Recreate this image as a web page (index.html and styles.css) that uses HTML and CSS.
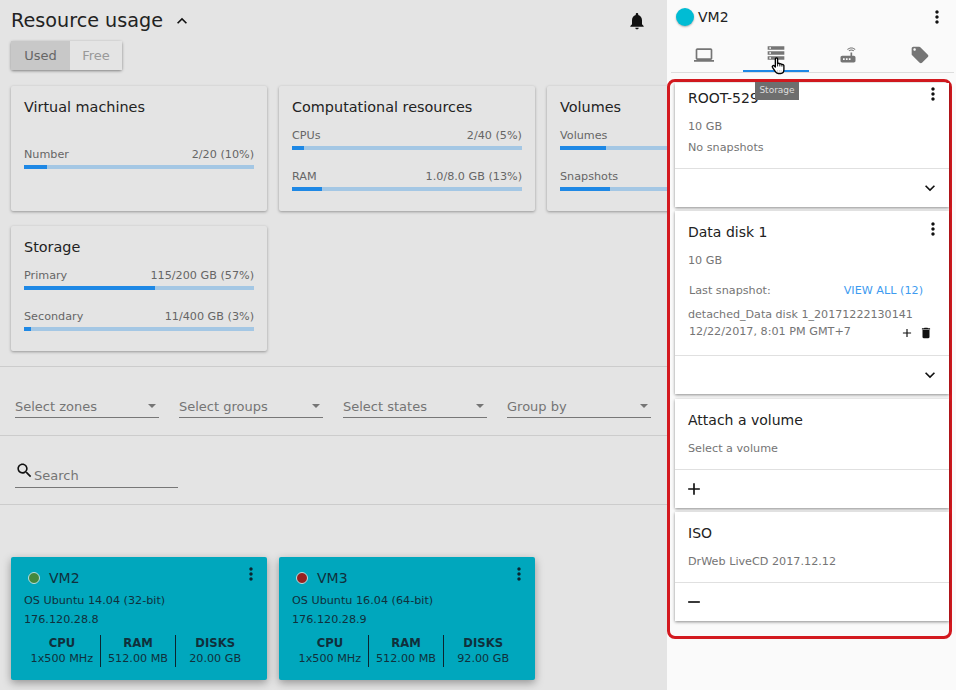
FILE: index.html
```html
<!DOCTYPE html>
<html lang="en">
<head>
    <meta charset="UTF-8">
    <title>Resource usage</title>
    <link rel="stylesheet" href="styles.css">
</head>
<body>
    <svg class="defs" width="0" height="0">
        <symbol id="i-more" viewBox="0 0 24 24"><path d="M12 8c1.1 0 2-.9 2-2s-.9-2-2-2-2 .9-2 2 .9 2 2 2zm0 2c-1.1 0-2 .9-2 2s.9 2 2 2 2-.9 2-2-.9-2-2-2zm0 6c-1.1 0-2 .9-2 2s.9 2 2 2 2-.9 2-2-.9-2-2-2z"/></symbol>
        <symbol id="i-down" viewBox="0 0 24 24"><path d="M16.59 8.59L12 13.17 7.41 8.59 6 10l6 6 6-6z"/></symbol>
        <symbol id="i-add" viewBox="0 0 24 24"><path d="M19 13h-6v6h-2v-6H5v-2h6V5h2v6h6v2z"/></symbol>
    </svg>

    <main class="main">
        <div class="title-row">
            <h1>Resource usage</h1>
            <svg class="icon chevron" viewBox="0 0 24 24"><path d="M12 8l-6 6 1.41 1.41L12 10.83l4.59 4.58L18 14z"/></svg>
            <svg class="icon bell" viewBox="0 0 24 24"><path d="M12 22c1.1 0 2-.9 2-2h-4c0 1.1.89 2 2 2zm6-6v-5c0-3.07-1.64-5.64-4.5-6.32V4c0-.83-.67-1.5-1.5-1.5s-1.5.67-1.5 1.5v.68C7.63 5.36 6 7.92 6 11v5l-2 2v1h16v-1l-2-2z"/></svg>
        </div>
        <div class="toggle">
            <span class="toggle-on">Used</span>
            <span class="toggle-off">Free</span>
        </div>

        <section class="stats">
            <div class="stat-card">
                <h2>Virtual machines</h2>
                <div class="stat-body stat-body-low">
                    <div class="meter">
                        <div class="meter-text"><span>Number</span><span>2/20 (10%)</span></div>
                        <div class="bar"><div class="bar-fill" style="width: 10%"></div></div>
                    </div>
                </div>
            </div>
            <div class="stat-card">
                <h2>Computational resources</h2>
                <div class="stat-body">
                    <div class="meter">
                        <div class="meter-text"><span>CPUs</span><span>2/40 (5%)</span></div>
                        <div class="bar"><div class="bar-fill" style="width: 5%"></div></div>
                    </div>
                    <div class="meter">
                        <div class="meter-text"><span>RAM</span><span>1.0/8.0 GB (13%)</span></div>
                        <div class="bar"><div class="bar-fill" style="width: 13%"></div></div>
                    </div>
                </div>
            </div>
            <div class="stat-card">
                <h2>Volumes</h2>
                <div class="stat-body">
                    <div class="meter">
                        <div class="meter-text"><span>Volumes</span></div>
                        <div class="bar"><div class="bar-fill" style="width: 20%"></div></div>
                    </div>
                    <div class="meter">
                        <div class="meter-text"><span>Snapshots</span></div>
                        <div class="bar"><div class="bar-fill" style="width: 21.7%"></div></div>
                    </div>
                </div>
            </div>
            <div class="stat-card">
                <h2>Storage</h2>
                <div class="stat-body">
                    <div class="meter">
                        <div class="meter-text"><span>Primary</span><span>115/200 GB (57%)</span></div>
                        <div class="bar"><div class="bar-fill" style="width: 57%"></div></div>
                    </div>
                    <div class="meter">
                        <div class="meter-text"><span>Secondary</span><span>11/400 GB (3%)</span></div>
                        <div class="bar"><div class="bar-fill" style="width: 3%"></div></div>
                    </div>
                </div>
            </div>
        </section>

        <section class="filters">
            <div class="select"><span>Select zones</span><i class="caret"></i></div>
            <div class="select"><span>Select groups</span><i class="caret"></i></div>
            <div class="select"><span>Select states</span><i class="caret"></i></div>
            <div class="select"><span>Group by</span><i class="caret"></i></div>
        </section>

        <section class="search-row">
            <div class="search">
                <svg class="icon search-icon" viewBox="0 0 24 24"><path d="M15.5 14h-.79l-.28-.27C15.41 12.59 16 11.11 16 9.5 16 5.91 13.09 3 9.5 3S3 5.91 3 9.5 5.91 16 9.5 16c1.61 0 3.09-.59 4.23-1.57l.27.28v.79l5 4.99L20.49 19l-4.99-5zm-6 0C7.01 14 5 11.99 5 9.5S7.01 5 9.5 5 14 7.01 14 9.5 11.99 14 9.5 14z"/></svg>
                <span>Search</span>
            </div>
        </section>

        <section class="vms">
            <div class="vm-card">
                <div class="vm-head">
                    <i class="dot dot-green"></i><span class="vm-name">VM2</span>
                    <svg class="icon vm-more"><use href="#i-more"/></svg>
                </div>
                <div class="vm-line">OS Ubuntu 14.04 (32-bit)</div>
                <div class="vm-line">176.120.28.8</div>
                <div class="vm-specs">
                    <div class="spec"><b>CPU</b><span>1x500 MHz</span></div>
                    <div class="spec"><b>RAM</b><span>512.00 MB</span></div>
                    <div class="spec"><b>DISKS</b><span>20.00 GB</span></div>
                </div>
            </div>
            <div class="vm-card">
                <div class="vm-head">
                    <i class="dot dot-red"></i><span class="vm-name">VM3</span>
                    <svg class="icon vm-more"><use href="#i-more"/></svg>
                </div>
                <div class="vm-line">OS Ubuntu 16.04 (64-bit)</div>
                <div class="vm-line">176.120.28.9</div>
                <div class="vm-specs">
                    <div class="spec"><b>CPU</b><span>1x500 MHz</span></div>
                    <div class="spec"><b>RAM</b><span>512.00 MB</span></div>
                    <div class="spec"><b>DISKS</b><span>92.00 GB</span></div>
                </div>
            </div>
        </section>
    </main>

    <aside class="side">
        <div class="side-head">
            <i class="side-dot"></i>
            <span class="side-name">VM2</span>
            <svg class="icon side-more"><use href="#i-more"/></svg>
        </div>
        <nav class="tabs">
            <div class="tab">
                <svg class="icon" viewBox="0 0 24 24"><path d="M20 18c1.1 0 1.99-.9 1.99-2L22 6c0-1.1-.9-2-2-2H4c-1.1 0-2 .9-2 2v10c0 1.1.9 2 2 2H0v2h24v-2h-4zM4 6h16v10H4V6z"/></svg>
            </div>
            <div class="tab tab-active">
                <svg class="icon" viewBox="0 0 24 24"><path d="M2 20h20v-4H2v4zm2-3h2v2H4v-2zM2 4v4h20V4H2zm4 3H4V5h2v2zm-4 7h20v-4H2v4zm2-3h2v2H4v-2z"/></svg>
            </div>
            <div class="tab">
                <svg class="icon" viewBox="0 0 24 24"><path d="M20.2 5.9l.8-.8C19.6 3.7 17.8 3 16 3s-3.6.7-5 2.1l.8.8C13 4.8 14.5 4.2 16 4.2s3 .6 4.2 1.7zm-.9.8c-.9-.9-2.1-1.4-3.3-1.4s-2.4.5-3.3 1.4l.8.8c.7-.7 1.6-1 2.5-1 .9 0 1.8.3 2.5 1l.8-.8zM19 13h-2V9h-2v4H5c-1.1 0-2 .9-2 2v4c0 1.1.9 2 2 2h14c1.1 0 2-.9 2-2v-4c0-1.1-.9-2-2-2zM8 18H6v-2h2v2zm3.5 0h-2v-2h2v2zm3.5 0h-2v-2h2v2z"/></svg>
            </div>
            <div class="tab">
                <svg class="icon" viewBox="0 0 24 24"><path d="M21.41 11.58l-9-9C12.05 2.22 11.55 2 11 2H4c-1.1 0-2 .9-2 2v7c0 .55.22 1.05.59 1.42l9 9c.36.36.86.58 1.41.58.55 0 1.05-.22 1.41-.59l7-7c.37-.36.59-.86.59-1.41 0-.55-.23-1.06-.59-1.42zM5.5 7C4.67 7 4 6.33 4 5.5S4.67 4 5.5 4 7 4.67 7 5.5 6.33 7 5.5 7z"/></svg>
            </div>
        </nav>

        <div class="frame">
            <div class="disk disk-root">
                <div class="disk-body">
                    <h3>ROOT-529</h3>
                    <svg class="icon disk-more"><use href="#i-more"/></svg>
                    <p class="muted">10 GB</p>
                    <p class="muted">No snapshots</p>
                </div>
                <div class="disk-foot foot-right"><svg class="icon"><use href="#i-down"/></svg></div>
            </div>

            <div class="disk disk-data">
                <div class="disk-body">
                    <h3>Data disk 1</h3>
                    <svg class="icon disk-more"><use href="#i-more"/></svg>
                    <p class="muted">10 GB</p>
                    <div class="snap-head"><span>Last snapshot:</span><a class="view-all">VIEW ALL (12)</a></div>
                    <p class="muted snap-name">detached_Data disk 1_20171222130141</p>
                    <div class="snap-date">
                        <span>12/22/2017, 8:01 PM GMT+7</span>
                        <svg class="icon snap-icon"><use href="#i-add"/></svg>
                        <svg class="icon snap-icon" viewBox="0 0 24 24"><path d="M6 19c0 1.1.9 2 2 2h8c1.1 0 2-.9 2-2V7H6v12zM19 4h-3.5l-1-1h-5l-1 1H5v2h14V4z"/></svg>
                    </div>
                </div>
                <div class="disk-foot foot-right"><svg class="icon"><use href="#i-down"/></svg></div>
            </div>

            <div class="disk disk-attach">
                <div class="disk-body">
                    <h3>Attach a volume</h3>
                    <p class="muted">Select a volume</p>
                </div>
                <div class="disk-foot"><svg class="icon"><use href="#i-add"/></svg></div>
            </div>

            <div class="disk disk-iso">
                <div class="disk-body">
                    <h3>ISO</h3>
                    <p class="muted">DrWeb LiveCD 2017.12.12</p>
                </div>
                <div class="disk-foot">
                    <svg class="icon" viewBox="0 0 24 24"><path d="M19 13H5v-2h14v2z"/></svg>
                </div>
            </div>
        </div>

        <div class="tooltip">Storage</div>
        <svg class="hand" viewBox="0 0 18 20">
            <path d="M5.5 2.2c0-1.6 2.5-1.6 2.5 0v5.2c.9-.5 2-.3 2.4.4.8-.5 2-.2 2.3.6.9-.4 2.2.1 2.3 1.2v4.4c0 2.2-1.3 4.3-3.6 4.3H8.7c-1.5 0-2.5-.8-3.2-2L2.3 11.500c-.8-1.400 1-2.700 2.100-1.500l1.100 1.200z" fill="#fff" stroke="#000" stroke-width="1.5" stroke-linejoin="round"/>
            <path d="M8 7.5v3M10.500 8v2.500M12.800 8.700v2" fill="none" stroke="#000"/>
            <path d="M7.500 15.500h.8M9.500 15.500h.8M11.500 15.500h.8" fill="none" stroke="#888"/>
        </svg>
    </aside>
</body>
</html>
```

FILE: styles.css
```css
* {
    box-sizing: border-box;
}
html, body {
    height: 100%;
}
body {
    margin: 0;
    display: flex;
    width: 956px;
    height: 690px;
    overflow: hidden;
    font-family: "DejaVu Sans", sans-serif;
    color: #222;
    background-color: #e4e4e4;
}
h1, h2, h3, p {
    margin: 0;
    font-weight: normal;
}
.defs {
    position: absolute;
}
.icon {
    display: block;
    width: 24px;
    height: 24px;
    fill: currentColor;
    flex: none;
}

/* left part, dimmed */
.main {
    width: 667px;
    flex: none;
    overflow: hidden;
    background-color: #e4e4e4;
}
.title-row {
    display: flex;
    align-items: center;
    height: 41px;
    padding: 0 20px 0 11px;
}
.title-row h1 {
    font-size: 19.2px;
    color: #222;
}
.chevron {
    width: 20px;
    height: 20px;
    margin-left: 9px;
    color: #111;
}
.bell {
    width: 20px;
    height: 20px;
    margin-left: auto;
    color: #111;
}
.toggle {
    display: flex;
    width: 111px;
    height: 29px;
    margin-left: 11px;
    font-size: 13px;
    line-height: 29px;
    border-radius: 2px;
    box-shadow: 0 1px 3px rgba(0, 0, 0, 0.45);
}
.toggle-on {
    width: 59px;
    text-align: center;
    color: #666;
    background-color: #c8c8c8;
}
.toggle-off {
    width: 52px;
    text-align: center;
    color: #999;
    background-color: #e4e4e4;
}

.stats {
    display: grid;
    grid-template-columns: 256px 256px 256px;
    grid-auto-rows: 125px;
    gap: 15px 12px;
    margin-top: 16px;
    padding: 0 11px 15px;
    border-bottom: 1px solid #ccc;
    width: 800px;
}
.stat-card {
    padding: 12px 13px 0;
    background-color: #e4e4e4;
    border-radius: 2px;
    box-shadow: 0 1px 3px rgba(0, 0, 0, 0.35);
}
.stat-card h2 {
    font-size: 14.4px;
    line-height: 18px;
    color: #222;
}
.stat-body {
    margin-top: 13px;
}
.stat-body-low {
    margin-top: 32px;
}
.meter {
    margin-bottom: 20px;
}
.meter-text {
    display: flex;
    justify-content: space-between;
    font-size: 11.2px;
    line-height: 14px;
    color: #666;
}
.bar {
    height: 4px;
    margin-top: 3px;
    background-color: #a4c7e4;
}
.bar-fill {
    height: 100%;
    background-color: #1e88e5;
}

.filters {
    display: flex;
    gap: 20px;
    height: 69px;
    padding: 0 15px;
    align-items: flex-end;
    padding-bottom: 17px;
    border-bottom: 1px solid #ccc;
    width: 667px;
}
.select {
    display: flex;
    align-items: center;
    justify-content: space-between;
    width: 144px;
    height: 22px;
    font-size: 13px;
    color: #757575;
    border-bottom: 1px solid #777;
}
.caret {
    width: 0;
    height: 0;
    margin-right: 3px;
    margin-bottom: 2px;
    border-left: 4px solid transparent;
    border-right: 4px solid transparent;
    border-top: 4px solid #757575;
}

.search-row {
    height: 69px;
    padding: 0 15px;
    border-bottom: 1px solid #ccc;
    display: flex;
    align-items: flex-end;
    padding-bottom: 16px;
}
.search {
    display: flex;
    align-items: flex-end;
    width: 163px;
    height: 27px;
    padding-bottom: 4px;
    font-size: 13px;
    color: #757575;
    border-bottom: 1px solid #777;
}
.search-icon {
    width: 19px;
    height: 19px;
    margin-bottom: 3px;
    color: #111;
}

.vms {
    display: flex;
    gap: 12px;
    margin-top: 52px;
    padding: 0 11px;
}
.vm-card {
    width: 256px;
    height: 123px;
    padding: 12px 13px 0;
    color: #10303c;
    background-color: #00a7bd;
    border-radius: 2px;
    box-shadow: 0 3px 8px rgba(0, 0, 0, 0.35);
}
.vm-head {
    display: flex;
    align-items: center;
    height: 17px;
    margin-bottom: 8px;
}
.vm-name {
    margin-left: 9px;
    font-size: 14px;
}
.dot {
    width: 12px;
    height: 12px;
    margin-left: 4px;
    margin-top: 1px;
    border-radius: 50%;
    border: 1.5px solid #b8dfe0;
}
.dot-green {
    background-color: #43883c;
}
.dot-red {
    background-color: #98201f;
}
.vm-more {
    width: 20px;
    height: 20px;
    margin-left: auto;
    margin-right: -7px;
    margin-top: -7px;
    color: #0b2530;
}
.vm-line {
    margin-top: 5px;
    font-size: 11.2px;
    line-height: 14px;
}
.vm-head + .vm-line {
    margin-top: 0;
}
.vm-specs {
    display: flex;
    margin-top: 8px;
}
.spec {
    display: flex;
    flex-direction: column;
    align-items: center;
    width: 77px;
    height: 32px;
    font-size: 11.2px;
    line-height: 16px;
    border-right: 1px solid #0b2530;
}
.spec + .spec {
    width: 76px;
}
.spec:last-child {
    border-right: none;
    width: 78px;
}
.spec b {
    font-size: 11.6px;
    font-weight: bold;
}

/* right panel */
.side {
    position: relative;
    width: 289px;
    flex: none;
    background-color: #fafafa;
}
.side-head {
    display: flex;
    align-items: center;
    height: 34px;
    padding: 0 9px;
}
.side-dot {
    width: 18px;
    height: 18px;
    border-radius: 50%;
    background-color: #00bcd4;
    box-shadow: 0 1px 2px rgba(0, 0, 0, 0.3);
}
.side-name {
    margin-left: 4px;
    font-size: 14px;
    color: #222;
}
.side-more {
    width: 20px;
    height: 20px;
    margin-left: auto;
    color: #111;
}
.tabs {
    display: flex;
    height: 39px;
    margin: 0 2px 0 4px;
    border-bottom: 1px solid #ddd;
}
.tab {
    display: flex;
    align-items: center;
    justify-content: center;
    flex: none;
    width: 66px;
    height: 38px;
    margin-right: 6px;
    padding-top: 4px;
    color: #757575;
}
.tab:last-child {
    margin-right: 0;
}
.tab .icon {
    width: 20px;
    height: 20px;
}
.tab-active {
    padding-top: 2px;
    border-bottom: 2px solid #1e88e5;
}
.frame {
    width: 285px;
    height: 560px;
    margin-top: 6px;
    padding: 1px 0 0 5px;
    border: 3px solid #d3191f;
    border-radius: 8px;
}
.disk {
    display: flex;
    flex-direction: column;
    margin-bottom: 4px;
    background-color: #fff;
    box-shadow: 0 1px 3px rgba(0, 0, 0, 0.45);
}
.disk-root {
    height: 124px;
}
.disk-data {
    height: 183px;
    margin-bottom: 5px;
}
.disk-attach,
.disk-iso {
    height: 109px;
}
.disk-body {
    position: relative;
    flex: 1;
    padding: 12px 13px 0;
    border-bottom: 1px solid #e0e0e0;
}
.disk-root .disk-body {
    padding-top: 6px;
}
.disk h3 {
    font-size: 14px;
    line-height: 18px;
    color: #222;
    margin-bottom: 13px;
}
.disk-more {
    position: absolute;
    top: 8px;
    right: 6px;
    width: 20px;
    height: 20px;
    color: #111;
}
.disk-root .disk-more {
    top: 1px;
}
.muted {
    font-size: 11.2px;
    line-height: 14px;
    color: #757575;
    margin-bottom: 7px;
}
.snap-head {
    display: flex;
    justify-content: space-between;
    padding: 0 13px 0 1px;
    margin-top: 16px;
    font-size: 11.2px;
    line-height: 14px;
    color: #757575;
}
.view-all {
    color: #3d9bf0;
}
.muted.snap-name {
    margin-top: 10px;
    margin-bottom: 2px;
    font-size: 11.1px;
}
.snap-date {
    display: flex;
    align-items: center;
    padding: 0 3px 0 1px;
    font-size: 11.2px;
    line-height: 14px;
    color: #757575;
}
.snap-date span {
    margin-right: auto;
}
.snap-icon {
    width: 14px;
    height: 14px;
    margin: 2px 0 0 5px;
    color: #111;
}
.disk-foot {
    display: flex;
    align-items: center;
    height: 38px;
    padding: 0 9px;
    flex: none;
    color: #111;
}
.foot-right {
    justify-content: flex-end;
}
.disk-foot .icon {
    width: 20px;
    height: 20px;
}
.tooltip {
    position: absolute;
    left: 88px;
    top: 82px;
    width: 44px;
    height: 18px;
    font-size: 9px;
    line-height: 16px;
    text-align: center;
    color: #ddd;
    background-color: #6e6e6e;
}
.hand {
    position: absolute;
    left: 103px;
    top: 57px;
    width: 17px;
    height: 18px;
}
```
